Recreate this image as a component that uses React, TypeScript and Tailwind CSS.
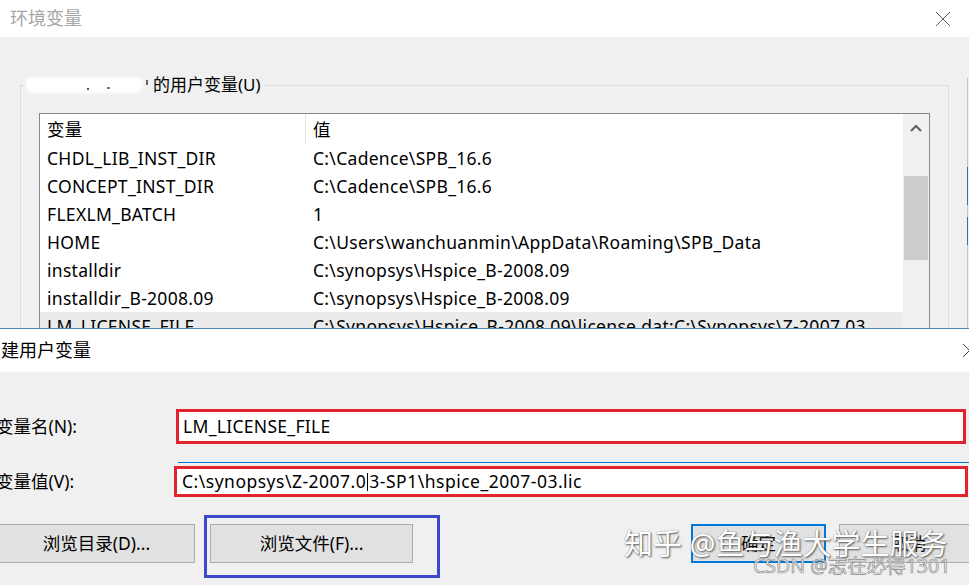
import * as React from "react";

const rows: [string, string][] = [
  ["CHDL_LIB_INST_DIR", "C:\\Cadence\\SPB_16.6"],
  ["CONCEPT_INST_DIR", "C:\\Cadence\\SPB_16.6"],
  ["FLEXLM_BATCH", "1"],
  ["HOME", "C:\\Users\\wanchuanmin\\AppData\\Roaming\\SPB_Data"],
  ["installdir", "C:\\synopsys\\Hspice_B-2008.09"],
  ["installdir_B-2008.09", "C:\\synopsys\\Hspice_B-2008.09"],
  ["LM_LICENSE_FILE", "C:\\Synopsys\\Hspice_B-2008.09\\license.dat;C:\\Synopsys\\Z-2007.03"],
];

function CloseX({ className }: { className?: string }) {
  return (
    <svg viewBox="0 0 16 16" className={className} fill="none" stroke="currentColor" strokeWidth="1">
      <path d="M1 1 L15 15 M15 1 L1 15" />
    </svg>
  );
}

function EnvWindow() {
  return (
    <div className="h-full">
      <div className="flex h-[37px] items-center justify-between bg-white pl-[10px] pr-[18px]">
        <span className="text-[18px] tracking-normal text-[#a6a6a6]">环境变量</span>
        <CloseX className="h-[16px] w-[16px] text-[#5a5a5a]" />
      </div>
      <div className="px-[20px] pt-[48px]">
        <div className="relative h-[320px] w-[929px] border border-[#dcdcdc] pl-[18px] pt-[27px]">
          <div className="absolute -top-[12px] left-[4px] flex items-center bg-[#f0f0f0] pr-[4px]">
            <div className="relative h-[22px] w-[128px]">
              <div className="absolute left-0 top-[3px] h-[16px] w-[118px] rounded-full bg-white blur-[1.5px]" />
              <div className="absolute left-[62px] top-[14px] h-[2px] w-[2px] bg-[#555]" />
              <div className="absolute left-[82px] top-[13px] h-[2px] w-[3px] bg-[#777]" />
              <div className="absolute left-[121px] top-[6px] h-[5px] w-[2px] bg-[#666]" />
            </div>
            <span className="text-[17px] leading-[22px] tracking-normal text-black">的用户变量(U)</span>
          </div>
          <div className="flex h-[260px] w-[891px] border border-[#828790] bg-white">
            <div className="flex-1 overflow-hidden">
              <div className="flex h-[30px] items-center">
                <div className="h-full w-[266px] border-r border-[#e5e5e5] pl-[7px] leading-[30px]">变量</div>
                <div className="pl-[7px]">值</div>
              </div>
              {rows.map(([k, v], i) => (
                <div
                  key={k}
                  className={`flex h-[28px] items-center whitespace-nowrap ${i === 6 ? "bg-[#ebebeb]" : ""}`}
                >
                  <div className="w-[266px] shrink-0 pl-[7px]">{k}</div>
                  <div className="flex-1 overflow-hidden pl-[7px]">{v}</div>
                </div>
              ))}
            </div>
            <div className="w-[26px] shrink-0 bg-[#f0f0f0]">
              <div className="flex h-[28px] items-center justify-center">
                <svg viewBox="0 0 12 8" className="h-[8px] w-[12px]" fill="none" stroke="#606060" strokeWidth="2">
                  <path d="M1 7 L6 2 L11 7" />
                </svg>
              </div>
              <div className="ml-px mt-[34px] h-[84px] w-[24px] bg-[#cdcdcd]" />
            </div>
          </div>
        </div>
      </div>
    </div>
  );
}

function NewVarWindow() {
  return (
    <div className="absolute bottom-0 left-0 top-[328px] w-full border-t border-[#4f86b8] bg-[#f0f0f0]">
      <div className="relative flex h-[43px] items-center bg-white pl-[1px]">
        <span className="text-[18px] tracking-normal text-black">建用户变量</span>
        <CloseX className="absolute left-[962px] top-[14px] h-[15px] w-[15px] text-[#333]" />
      </div>
      <div className="pt-[37px]">
        <div className="flex h-[35px] items-center">
          <div className="-ml-[4px] w-[180px] shrink-0 tracking-normal">变量名(N):</div>
          <div className="mr-[3px] flex h-[35px] flex-1 items-center border-[3px] border-[#e0232d] bg-white pl-[4px]">
            LM_LICENSE_FILE
          </div>
        </div>
        <div className="mt-[18px] flex items-end">
          <div className="-ml-[4px] flex h-[31px] w-[178px] shrink-0 items-center tracking-normal">变量值(V):</div>
          <div className="flex flex-1 flex-col">
            <div className="ml-[4px] h-px bg-[#0078d7]" />
            <div className="mr-px mt-[3px] flex h-[31px] items-center whitespace-nowrap border-[3px] border-[#e0232d] bg-white pl-[5px] tracking-[0.5px]">
              C:\synopsys\Z-2007.0
              <span className="mx-[1px] inline-block h-[18px] w-px bg-black" />
              3-SP1\hspice_2007-03.lic
            </div>
          </div>
        </div>
        <div className="mt-[18px] flex items-start tracking-normal">
          <button className="-ml-[2px] mt-[9px] h-[39px] w-[197px] shrink-0 border border-[#adadad] bg-[#e1e1e1]">
            浏览目录(D)...
          </button>
          <div className="ml-[9px] shrink-0 border-[3px] border-[#3f48cc] pb-[12px] pl-[3px] pr-[24px] pt-[6px]">
            <button className="h-[39px] w-[203px] border border-[#adadad] bg-[#e1e1e1]">浏览文件(F)...</button>
          </div>
          <button className="ml-[251px] mt-[9px] h-[39px] w-[135px] shrink-0 border-2 border-[#0078d7] bg-[#e1e1e1]">
            确定
          </button>
          <button className="ml-[13px] mt-[9px] h-[39px] w-[140px] shrink-0 border border-[#adadad] bg-[#e1e1e1]">
            取消
          </button>
        </div>
      </div>
    </div>
  );
}

export default function App() {
  return (
    <div
      className="relative h-[585px] w-[969px] overflow-hidden bg-[#f0f0f0] text-[17.5px] tracking-[0.3px] text-black"
      style={{ fontFamily: '"Noto Sans", "Noto Sans CJK SC", sans-serif' }}
    >
      <EnvWindow />
      <div className="absolute left-[967px] top-[78px] h-[250px] w-px bg-[#c4c4c4]" />
      <div className="absolute left-[967px] top-[167px] h-[38px] w-px bg-[#2a6fb0]" />
      <div className="absolute left-[967px] top-[217px] h-[28px] w-px bg-[#2a6fb0]" />
      <NewVarWindow />
      <div className="pointer-events-none absolute left-[624px] top-[526px] whitespace-nowrap text-[29px] leading-[36px] tracking-normal text-white [text-shadow:1px_1px_2px_#555,0_0_1px_#777]">
        知乎 @鱼与渔大学生服务
      </div>
      <div className="pointer-events-none absolute left-[753px] top-[554px] whitespace-nowrap text-[19.5px] leading-[24px] tracking-normal text-[#f2f2f2] [-webkit-text-stroke:0.7px_#8c8c8c]">
        CSDN @志在必得1301
      </div>
    </div>
  );
}
